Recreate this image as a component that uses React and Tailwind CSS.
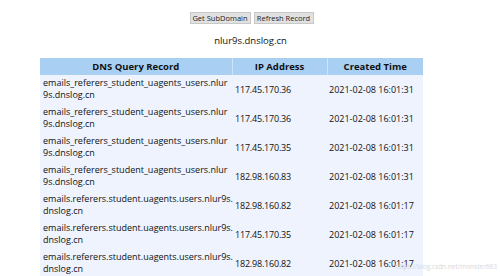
import React from "react";

const rows = [
  ["emails_referers_student_uagents_users.nlur", "9s.dnslog.cn", "117.45.170.36", "2021-02-08 16:01:31"],
  ["emails_referers_student_uagents_users.nlur", "9s.dnslog.cn", "117.45.170.36", "2021-02-08 16:01:31"],
  ["emails_referers_student_uagents_users.nlur", "9s.dnslog.cn", "117.45.170.35", "2021-02-08 16:01:31"],
  ["emails_referers_student_uagents_users.nlur", "9s.dnslog.cn", "182.98.160.83", "2021-02-08 16:01:31"],
  ["emails.referers.student.uagents.users.nlur9s.", "dnslog.cn", "182.98.160.82", "2021-02-08 16:01:17"],
  ["emails.referers.student.uagents.users.nlur9s.", "dnslog.cn", "117.45.170.35", "2021-02-08 16:01:17"],
  ["emails.referers.student.uagents.users.nlur9s.", "dnslog.cn", "182.98.160.82", "2021-02-08 16:01:17"],
];

export default function App() {
  return (
    <div
      className="relative w-[500px] h-[276px] overflow-hidden bg-white text-[#111]"
      style={{ fontFamily: '"Open Sans", "Noto Sans", sans-serif' }}
    >
      <div className="flex justify-center gap-[3px] pt-[12px] pl-[3px]">
        <button className="h-[12px] w-[61px] border border-[#c8c8c8] bg-[#e1e1e1] text-[7.5px] leading-[10px] text-[#222]">
          Get SubDomain
        </button>
        <button className="h-[12px] w-[60px] border border-[#c8c8c8] bg-[#e1e1e1] text-[7.5px] leading-[10px] text-[#222]">
          Refresh Record
        </button>
      </div>
      <div className="mt-[10px] pl-[1px] text-center text-[9.5px] leading-[14px]">nlur9s.dnslog.cn</div>
      <table className="ml-[40px] mt-[10px] w-[383px] table-fixed border-collapse bg-[#eef3fd] text-[9px]">
        <thead>
          <tr className="bg-[#a9d0f3]">
            <th className="h-[17px] w-[192px] border-r border-[#cfe3f8] p-0 text-center text-[9.5px] font-bold leading-[12px]">
              DNS Query Record
            </th>
            <th className="w-[95px] border-r border-[#cfe3f8] p-0 text-center text-[9.5px] font-bold leading-[12px]">
              IP Address
            </th>
            <th className="p-0 text-center text-[9.5px] font-bold leading-[12px]">Created Time</th>
          </tr>
        </thead>
        <tbody>
          {rows.map((r, i) => (
            <tr key={i} className="h-[29px]">
              <td className="pl-[3px] pt-[1px] pb-[3px] align-middle leading-[12px] whitespace-nowrap">
                {r[0]}
                <br />
                {r[1]}
              </td>
              <td className="pl-[3px] align-middle leading-[12px] whitespace-nowrap tracking-[-0.2px]">{r[2]}</td>
              <td className="pl-[2px] align-middle leading-[12px] whitespace-nowrap">{r[3]}</td>
            </tr>
          ))}
        </tbody>
      </table>
      <div className="absolute left-[395px] top-[262px] text-[6.5px] leading-[10px] text-[#d4d8de]">
        https://blog.csdn.net/monster663
      </div>
    </div>
  );
}
